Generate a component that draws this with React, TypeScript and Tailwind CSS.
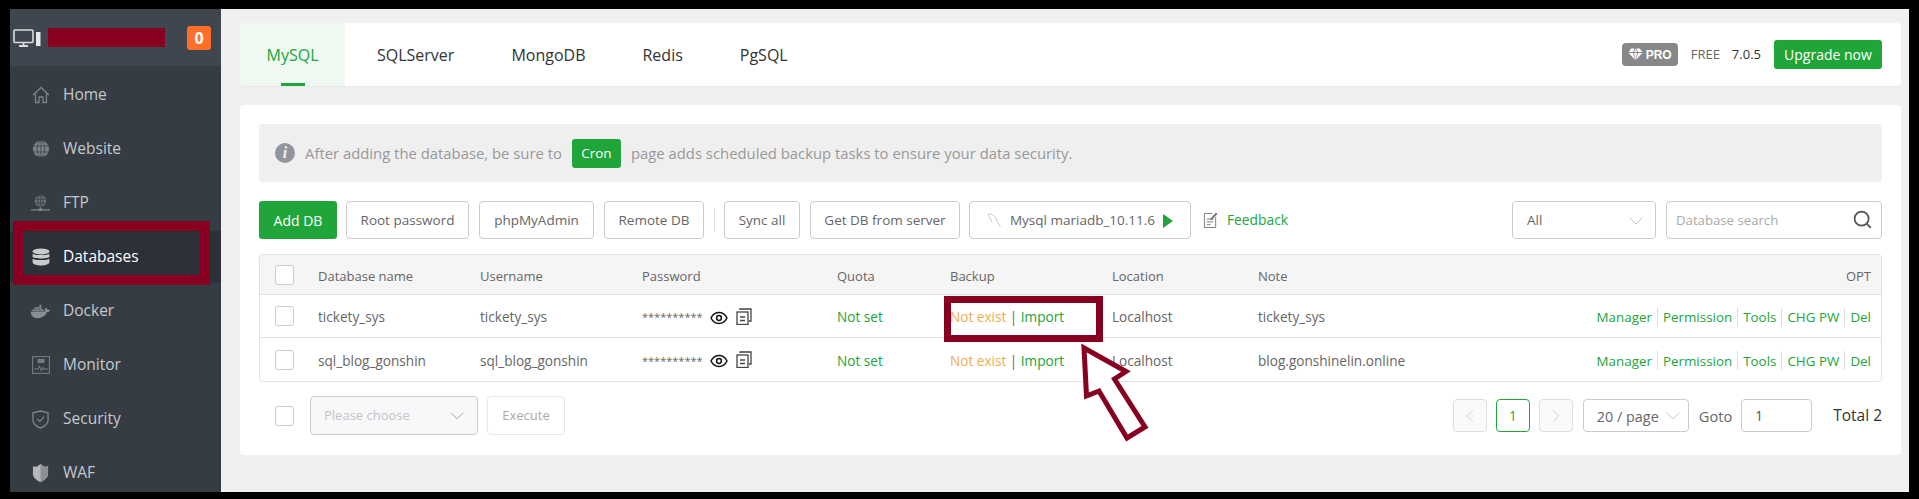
import React from 'react';
import { ChevronDown, ChevronLeft, ChevronRight, Search } from 'lucide-react';
import { FaDocker } from 'react-icons/fa';

const FONT = "font-['Open_Sans','Noto_Sans',sans-serif]";

const HomeIcon = () => (
  <svg viewBox="0 0 18 18" className="w-[18px] h-[18px]" fill="none" stroke="#7d8287" strokeWidth="1.3">
    <path d="M1 9 9 1.5 17 9M3.5 7.5V16.5H7V11H11V16.5H14.5V7.5" />
  </svg>
);
const GlobeIcon = () => (
  <svg viewBox="0 0 18 18" className="w-[18px] h-[18px]" fill="#7f8488" stroke="#3a4149" strokeWidth="0.8">
    <circle cx="9" cy="9" r="8.4" />
    <ellipse cx="9" cy="9" rx="3.8" ry="8.4" fill="none" />
    <path d="M1 6H17M1 12H17M9 .6V17.4" fill="none" />
  </svg>
);
const FtpIcon = () => (
  <svg viewBox="0 0 20 18" className="w-[19px] h-[18px]" fill="none" stroke="#80858a" strokeWidth="0.9">
    <circle cx="10" cy="7" r="6.4" fill="#6f7478" stroke="#3a4149" />
    <ellipse cx="10" cy="7" rx="2.8" ry="6.4" stroke="#3a4149" />
    <path d="M4 5H16M4 9H16M10 1V13" stroke="#3a4149" />
    <path d="M0 16.2H20M10 13.5V16" strokeWidth="1.3" />
    <rect x="8" y="14.8" width="4" height="2.6" fill="#80858a" stroke="none" />
  </svg>
);
const DatabaseIcon = () => (
  <svg viewBox="0 0 18 18" className="w-[18px] h-[18px]" fill="#c9cbcd">
    <ellipse cx="9" cy="3.4" rx="8.4" ry="3" />
    <path d="M.6 5.4C2 7.6 16 7.6 17.4 5.4V8.8C16 11 2 11 .6 8.8Z" />
    <path d="M.6 10.4C2 12.6 16 12.6 17.4 10.4V14.4C16 18.4 2 18.4 .6 14.4Z" />
  </svg>
);
const MonitorIcon = () => (
  <svg viewBox="0 0 18 18" className="w-[18px] h-[18px]" fill="none" stroke="#767b80" strokeWidth="1.1">
    <rect x=".6" y=".6" width="16.8" height="16.8" />
    <rect x="6" y="3.5" width="6" height="3" fill="#767b80" />
    <path d="M2 13H6L7.5 10.5 9.5 14.5 11 11.5 12 13H16" />
  </svg>
);
const ShieldIcon = () => (
  <svg viewBox="0 0 18 20" className="w-[17px] h-[19px]" fill="none" stroke="#80858a" strokeWidth="1.4">
    <path d="M9 1 17 3V11C17 15 12 18 9 19 6 18 1 15 1 11V3Z" />
    <path d="M5.5 9.5 8.2 12 12.8 7" />
  </svg>
);
const WafIcon = () => (
  <svg viewBox="0 0 18 20" className="w-[17px] h-[20px]">
    <path d="M1 3 5 3.5 9 .5 13 3.5 17 3V11C17 15 12 18.5 9 19.5 6 18.5 1 15 1 11Z" fill="#b5b8bb" />
    <path d="M9 .5 13 3.5 17 3V11C17 15 12 18.5 9 19.5Z" fill="#8d9194" />
  </svg>
);

const navItems = [
  { label: 'Home', icon: <HomeIcon /> },
  { label: 'Website', icon: <GlobeIcon /> },
  { label: 'FTP', icon: <FtpIcon /> },
  { label: 'Databases', icon: <DatabaseIcon />, active: true },
  { label: 'Docker', icon: <FaDocker className="w-[19px] h-[19px] text-[#8a8f94]" /> },
  { label: 'Monitor', icon: <MonitorIcon /> },
  { label: 'Security', icon: <ShieldIcon /> },
  { label: 'WAF', icon: <WafIcon /> },
];

const Sidebar = () => (
  <aside className="w-[211px] shrink-0 bg-[#363c43] overflow-hidden">
    <div className="h-[57px] bg-[#3f4650] flex items-center pl-[3px] pr-[10px]">
      <svg viewBox="0 0 28 18" className="w-[28px] h-[18px]" fill="none">
        <rect x="1" y="1" width="19" height="12.5" rx="1" stroke="#dcdcdc" strokeWidth="1.6" />
        <path d="M6 17H15M10.5 14V17" stroke="#dcdcdc" strokeWidth="1.8" />
        <rect x="23" y="3" width="4.5" height="14" fill="#e8e8e8" />
      </svg>
      <div className="ml-[7px] w-[117px] h-[19px] bg-[#88001f]" />
      <span className="ml-auto w-6 h-6 rounded-[3px] bg-[#ff6f28] text-white text-[16px] font-bold flex items-center justify-center">0</span>
    </div>
    <nav className="pt-[3px] flex flex-col gap-[2px]">
      {navItems.map((item) => (
        <div
          key={item.label}
          className={`h-[52px] pl-[21px] flex items-center ${item.active ? 'bg-[#2c3038] text-white' : 'text-[#c5c9cc]'}`}
        >
          <span className="w-[19px] flex justify-center">{item.icon}</span>
          <span className="ml-[13px] text-[15.5px]">{item.label}</span>
        </div>
      ))}
    </nav>
  </aside>
);

const tabs = ['MySQL', 'SQLServer', 'MongoDB', 'Redis', 'PgSQL'];

const TopBar = () => (
  <div className="h-[63px] bg-white rounded-[4px] flex items-center pr-[19px] shadow-[0_1px_1px_rgba(0,0,0,0.04)]">
    <div className="relative w-[105px] h-full bg-[#eff8f1] rounded-l-[4px] text-[#20a53a] flex items-center justify-center text-[16px]">
      MySQL
      <span className="absolute bottom-0 left-[41px] w-6 h-[3px] bg-[#20a53a]" />
    </div>
    <div className="flex text-[16px] text-[#333] ml-[32px] gap-[57px]">
      {tabs.slice(1).map((t) => (
        <span key={t}>{t}</span>
      ))}
    </div>
    <div className="ml-auto flex items-center text-[13px]">
      <span className="w-[56px] h-[23px] rounded-[4px] bg-[#888] text-white text-[12px] font-bold flex items-center justify-center gap-[3px] font-['Liberation_Sans',sans-serif]">
        <svg viewBox="0 0 16 14" className="w-[15px] h-[13px]" fill="#fff">
          <path d="M3.4.5H7L5.4 4.4H.6ZM8.9.5H12.6L15.4 4.4H10.6ZM6.4 4.4 8 .9 9.6 4.4ZM.6 5.4H5.4L7.4 12.6ZM6.4 5.4H9.6L8 13ZM10.6 5.4H15.4L8.6 12.6Z" />
        </svg>
        PRO
      </span>
      <span className="ml-[13px] text-[#666]">FREE</span>
      <span className="ml-[12px] text-[#333]">7.0.5</span>
      <button className="ml-[13px] w-[108px] h-[29px] rounded-[3px] bg-[#20a53a] text-white text-[14px]">Upgrade now</button>
    </div>
  </div>
);

const Notice = () => (
  <div className="h-[58px] bg-[#efefef] rounded-[4px] flex items-center pl-4 text-[14.85px] text-[#999]">
    <span className="w-5 h-5 rounded-full bg-[#92959c] text-[#efefef] text-[16px] font-bold italic leading-none flex items-center justify-center font-['Liberation_Serif',serif]">i</span>
    <span className="ml-[10px]">After adding the database, be sure to</span>
    <span className="ml-[10px] w-[49px] h-[29px] rounded-[3px] bg-[#20a53a] text-white text-[13.5px] flex items-center justify-center">Cron</span>
    <span className="ml-[10px]">page adds scheduled backup tasks to ensure your data security.</span>
  </div>
);

const OutlineBtn = ({ w, children, className = '' }: { w: string; children: React.ReactNode; className?: string }) => (
  <button className={`${w} h-[38px] pt-[1px] rounded-[4px] border border-[#ccc] bg-white text-[#666] text-[13.5px] flex items-center justify-center ${className}`}>
    {children}
  </button>
);

const Toolbar = () => (
  <div className="flex items-center h-[38px]">
    <button className="w-[78px] h-[38px] pt-[1px] rounded-[3px] bg-[#20a53a] text-white text-[14px]">Add DB</button>
    <OutlineBtn w="w-[123px]" className="ml-[9px]">Root password</OutlineBtn>
    <OutlineBtn w="w-[115px]" className="ml-[10px]">phpMyAdmin</OutlineBtn>
    <OutlineBtn w="w-[100px]" className="ml-[10px]">Remote DB</OutlineBtn>
    <span className="ml-[10px] w-px h-6 bg-[#dde0e4]" />
    <OutlineBtn w="w-[76px]" className="ml-[9px]">Sync all</OutlineBtn>
    <OutlineBtn w="w-[150px]" className="ml-[10px]">Get DB from server</OutlineBtn>
    <OutlineBtn w="w-[222px]" className="ml-[9px] gap-2">
      <svg viewBox="0 0 15 15" className="w-[15px] h-[15px]" fill="none" stroke="#b7d0de" strokeWidth="1">
        <path d="M1 1C5 .5 8 3 9.5 7L13.5 14M1 1C2 4.5 4 6 5 9.5" />
      </svg>
      <span>Mysql mariadb_10.11.6</span>
      <svg viewBox="0 0 10 14" className="w-[10px] h-[14px]"><path d="M0 0 10 7 0 14Z" fill="#20a53a" /></svg>
    </OutlineBtn>
    <svg viewBox="0 0 16 18" className="ml-[12px] w-[15px] h-[18px]" fill="none" stroke="#777" strokeWidth="1">
      <path d="M10 2H1.5V17H13.5V6" />
      <path d="M4 8H11M4 11H11M4 14H8" />
      <path d="M8 8 14 1.5 15 2.5 9 9Z" fill="#777" />
    </svg>
    <span className="ml-[9px] pt-[1px] text-[13.8px] text-[#20a53a]">Feedback</span>
    <div className="ml-auto w-[144px] h-[38px] pt-[1px] rounded-[4px] border border-[#ccc] flex items-center justify-between pl-[14px] pr-[7px] text-[13.5px] text-[#666]">
      All
      <ChevronDown className="w-6 h-6 text-[#c4c4c4]" strokeWidth={1} />
    </div>
    <div className="ml-[10px] w-[216px] h-[38px] pt-[1px] rounded-[4px] border border-[#ccc] flex items-center justify-between pl-[9px] pr-[8px] text-[13.2px] text-[#aaa]">
      Database search
      <Search className="w-[21px] h-[21px] -mt-[3px] text-[#555]" strokeWidth={2} />
    </div>
  </div>
);

const Checkbox = () => <span className="block w-[19px] h-5 rounded-[3px] border border-[#ccc] bg-white" />;

const rows = [
  { name: 'tickety_sys', user: 'tickety_sys', note: 'tickety_sys' },
  { name: 'sql_blog_gonshin', user: 'sql_blog_gonshin', note: 'blog.gonshinelin.online' },
];

const gridCols = 'grid grid-cols-[58px_162px_162px_195px_113px_162px_146px_1fr] items-center';

const PasswordIcons = () => (
  <span className="ml-[8px] flex items-center gap-[8px]">
    <svg viewBox="0 0 18 14" className="w-[18px] h-[14px]" fill="none" stroke="#111" strokeWidth="1.5">
      <path d="M1 7C3 3 6 1.5 9 1.5S15 3 17 7C15 11 12 12.5 9 12.5S3 11 1 7Z" />
      <circle cx="9" cy="7" r="2.4" />
    </svg>
    <svg viewBox="0 0 16 17" className="w-[16px] h-[17px] -mt-[3px]" fill="none" stroke="#444" strokeWidth="1.3">
      <rect x="1" y="4" width="11" height="12.5" />
      <path d="M4 2V1H15V13H13M4 9H9M4 12.5H9" />
    </svg>
  </span>
);

const Ops = () => {
  const ops = ['Manager', 'Permission', 'Tools', 'CHG PW', 'Del'];
  return (
    <div className="flex justify-end items-center text-[13.4px] text-[#20a53a]">
      {ops.map((op, i) => (
        <React.Fragment key={op}>
          {i > 0 && <span className="mx-[5px] w-px h-[19px] bg-[#ddd]" />}
          <span>{op}</span>
        </React.Fragment>
      ))}
    </div>
  );
};

const DbTable = () => (
  <div className="mt-[15px] rounded-[4px] border border-[#e2e2e2] text-[13px] text-[#666]">
    <div className={`${gridCols} h-[40px] bg-[#f5f5f5] border-b border-[#e2e2e2] rounded-t-[4px] [&>*:not(:first-child)]:pt-[5px]`}>
      <span className="pl-[15px]"><Checkbox /></span>
      <span>Database name</span>
      <span>Username</span>
      <span>Password</span>
      <span>Quota</span>
      <span>Backup</span>
      <span>Location</span>
      <div className="flex justify-between pr-[10px]"><span>Note</span><span>OPT</span></div>
    </div>
    {rows.map((r, i) => (
      <div key={r.name} className={`${gridCols} h-[43px] text-[13.6px] [&>*:not(:first-child)]:pt-[3px] ${i === 0 ? 'border-b border-[#e2e2e2]' : ''}`}>
        <span className="pl-[15px]"><Checkbox /></span>
        <span>{r.name}</span>
        <span>{r.user}</span>
        <span className="flex items-center">
          <span className="w-[60px] text-[11px] overflow-hidden">**********</span>
          <PasswordIcons />
        </span>
        <span className="text-[#20a53a]">Not set</span>
        <span>
          <span className="text-[#f0ad4e]">Not exist</span> | <span className="text-[#20a53a]">Import</span>
        </span>
        <span>Localhost</span>
        <div className="flex justify-between pr-[10px]"><span>{r.note}</span><Ops /></div>
      </div>
    ))}
  </div>
);

const PagerBtn = ({ children }: { children: React.ReactNode }) => (
  <span className="w-[34px] h-[33px] rounded-[4px] border border-[#ddd] bg-[#fafafa] flex items-center justify-center text-[#ccc]">{children}</span>
);

const Footer = () => (
  <div className="mt-[14px] flex items-start pl-4">
    <span className="mt-[10px]"><Checkbox /></span>
    <div className="ml-[16px] w-[168px] h-[39px] pt-[1px] rounded-[4px] border border-[#ccc] bg-[#f8f8fa] flex items-center justify-between pl-[13px] pr-[8px] text-[13px] text-[#c4c4c4]">
      Please choose
      <ChevronDown className="w-6 h-6 text-[#aaa]" strokeWidth={1} />
    </div>
    <button className="ml-[9px] w-[78px] h-[39px] pt-[1px] rounded-[4px] border border-[#e8e8e8] text-[13px] text-[#aaa]">Execute</button>
    <div className="ml-auto mt-[3px] flex items-center text-[13.6px]">
      <PagerBtn><ChevronLeft className="w-[22px] h-[22px]" strokeWidth={1} /></PagerBtn>
      <span className="ml-[9px] w-[34px] h-[33px] pt-[2px] rounded-[4px] border border-[#20a53a] flex items-center justify-center text-[#20a53a]">1</span>
      <span className="ml-[9px]"><PagerBtn><ChevronRight className="w-[22px] h-[22px]" strokeWidth={1} /></PagerBtn></span>
      <span className="ml-[10px] w-[106px] h-[33px] rounded-[4px] border border-[#ccc] flex items-center justify-between pl-[13px] pr-[3px] text-[14.4px] text-[#666]">
        <span className="pt-[2px]">20 / page</span>
        <ChevronDown className="w-6 h-6 text-[#c4c4c4]" strokeWidth={1} />
      </span>
      <span className="ml-[10px] pt-[2px] text-[14.6px] text-[#666]">Goto</span>
      <span className="ml-[9px] w-[71px] h-[33px] pt-[2px] rounded-[4px] border border-[#ccc] flex items-center pl-[13px] text-[#555]">1</span>
      <span className="ml-[21px] pt-[1px] text-[15.5px] text-[#333] leading-none">Total 2</span>
    </div>
  </div>
);

export default function App() {
  return (
    <div className={`relative h-[499px] overflow-hidden bg-black pt-[9px] pl-[10px] pr-[10px] pb-[7px] ${FONT}`}>
      <div className="flex h-full bg-[#f0f0f0]">
        <Sidebar />
        <main className="flex-1 min-w-0 pt-[14px] pl-[19px] pr-2">
          <TopBar />
          <section className="mt-[19px] h-[350px] bg-white rounded-[4px] pt-[19px] px-[19px]">
            <Notice />
            <div className="mt-[19px]"><Toolbar /></div>
            <DbTable />
            <Footer />
          </section>
        </main>
      </div>
      {/* red annotations drawn over the screenshot */}
      <div className="absolute left-[13px] top-[221px] w-[197px] h-[64px] border-[10px] border-[#88001f]" />
      <div className="absolute left-[944px] top-[296px] w-[159px] h-[46px] border-[7px] border-[#88001f]" />
      <svg className="absolute left-[1075px] top-[336px] w-[80px] h-[112px]" viewBox="1075 336 80 112">
        <path
          d="M1084 348 1126 371.5 1114.5 379 1145 427 1127 438 1099 391 1086.5 396Z"
          fill="#fff"
          stroke="#88001f"
          strokeWidth="5"
        />
      </svg>
    </div>
  );
}
